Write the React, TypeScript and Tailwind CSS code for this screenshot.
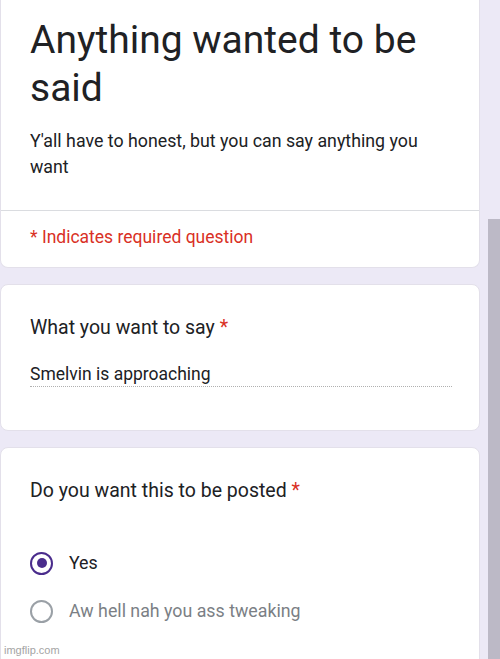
import React from "react";

export default function App() {
  return (
    <div
      className="relative flex h-[659px] w-[500px] overflow-hidden bg-[#ece9f6] text-[#202124]"
      style={{ fontFamily: "Roboto, 'Noto Sans', Arial, sans-serif" }}
    >
      <div className="flex w-[480px] shrink-0 flex-col gap-4">
        {/* Header card */}
        <div className="flex h-[268px] shrink-0 flex-col rounded-b-lg border border-t-0 border-[#e3e0ea] bg-white">
          <div className="px-[29px] pt-4">
            <h1 className="text-[39px] leading-[48px] font-normal">Anything wanted to be said</h1>
            <p className="mt-4 text-[17.8px] leading-[26px]">
              Y'all have to honest, but you can say anything you want
            </p>
          </div>
          <div className="mt-[30px] h-px bg-[#dadce0]" />
          <div className="px-[29px] pt-[14px] text-[17.5px] leading-[24px] text-[#d93025]">
            * Indicates required question
          </div>
        </div>

        {/* Question 1 */}
        <div className="flex h-[147px] shrink-0 flex-col rounded-lg border border-[#e3e0ea] bg-white px-[29px] pt-[29px]">
          <div className="text-[19.5px] leading-[28px]">
            What you want to say <span className="text-[#d93025]">*</span>
          </div>
          <div className="mt-[20px] w-[422px] border-b border-dotted border-[#b0b0b0] text-[17.5px] leading-[24px]">
            Smelvin is approaching
          </div>
        </div>

        {/* Question 2 */}
        <div className="flex h-[260px] shrink-0 flex-col rounded-lg border border-[#e3e0ea] bg-white px-[29px] pt-[29px]">
          <div className="text-[19.5px] leading-[28px]">
            Do you want this to be posted <span className="text-[#d93025]">*</span>
          </div>
          <div className="mt-[34px] flex flex-col">
            <div className="flex h-12 items-center gap-4">
              <div className="flex h-[23px] w-[23px] items-center justify-center rounded-full border-[2.5px] border-[#4a2c8c]">
                <div className="h-[10px] w-[10px] rounded-full bg-[#4a2c8c]" />
              </div>
              <span className="text-[17.8px] leading-[24px]">Yes</span>
            </div>
            <div className="flex h-12 items-center gap-4">
              <div className="h-[23px] w-[23px] rounded-full border-[2px] border-[#9aa0a6]" />
              <span className="text-[17.8px] leading-[24px] text-[#7b7f85]">Aw hell nah you ass tweaking</span>
            </div>
          </div>
        </div>
      </div>

      {/* Scrollbar */}
      <div className="ml-2 mt-[219px] w-3 shrink-0 bg-[#bcb9c6]" />

      {/* Watermark */}
      <div
        className="absolute bottom-[2px] left-[4px] text-[11px] leading-[14px] text-[#a4a4a4]"
        style={{ fontFamily: "'Liberation Sans', Arial, sans-serif" }}
      >
        imgflip.com
      </div>
    </div>
  );
}
